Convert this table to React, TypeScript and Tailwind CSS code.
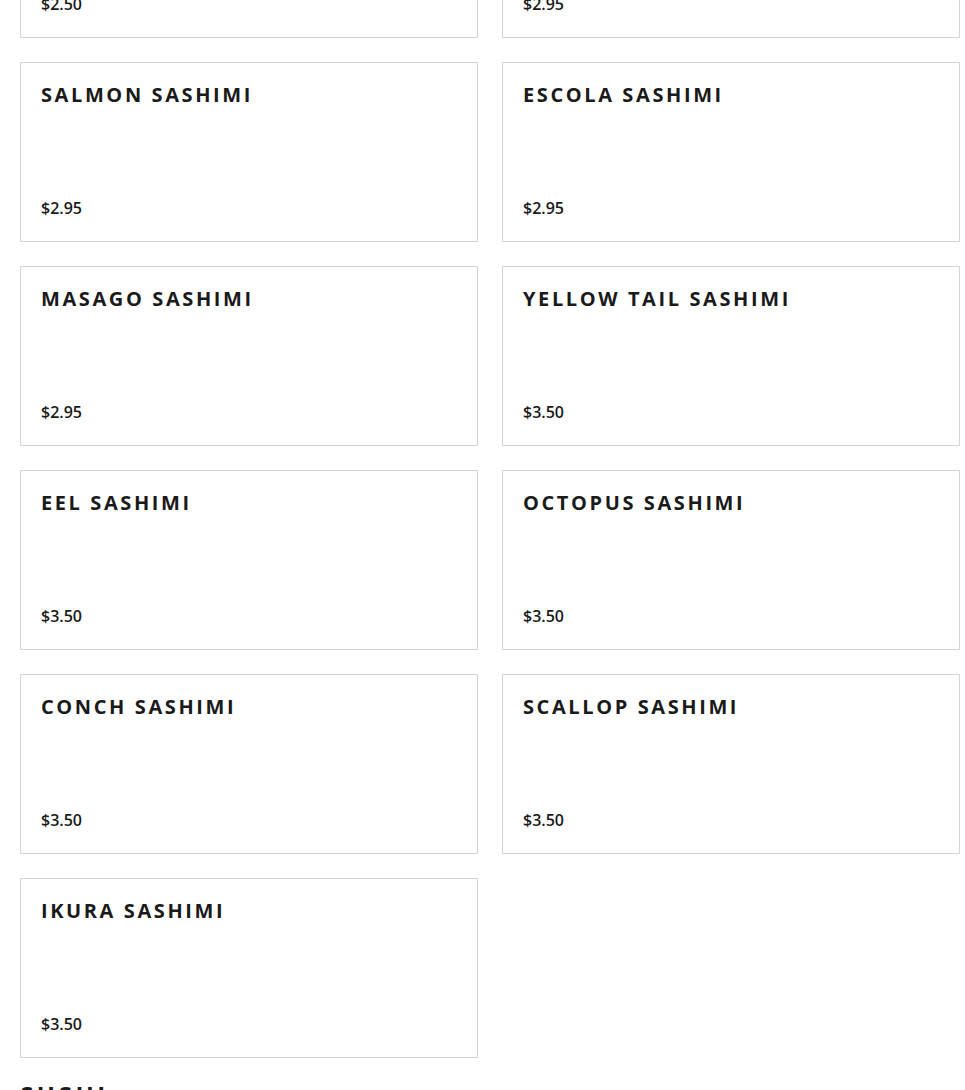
import React from "react";

const items: { name: string; price: string }[] = [
  { name: "Tuna Sashimi", price: "$2.50" },
  { name: "White Tuna Sashimi", price: "$2.95" },
  { name: "Salmon Sashimi", price: "$2.95" },
  { name: "Escola Sashimi", price: "$2.95" },
  { name: "Masago Sashimi", price: "$2.95" },
  { name: "Yellow Tail Sashimi", price: "$3.50" },
  { name: "Eel Sashimi", price: "$3.50" },
  { name: "Octopus Sashimi", price: "$3.50" },
  { name: "Conch Sashimi", price: "$3.50" },
  { name: "Scallop Sashimi", price: "$3.50" },
  { name: "Ikura Sashimi", price: "$3.50" },
];

function Card({ name, price }: { name: string; price: string }) {
  return (
    <div className="h-[180px] border border-[#d4d4d4] bg-white px-5 pt-[20px] pb-[23px] flex flex-col justify-between">
      <h3 className="uppercase text-[20px] leading-[24px] font-bold tracking-[0.13em] text-[#1a1a1a] [font-family:'Open_Sans',sans-serif]">
        {name}
      </h3>
      <p className="text-[16px] leading-[20px] font-semibold text-[#1a1a1a] [font-family:'Open_Sans',sans-serif]">
        {price}
      </p>
    </div>
  );
}

export default function App() {
  return (
    <div className="w-[965px] h-[1090px] overflow-hidden bg-white">
      <div className="pl-5 w-[960px] -mt-[142px]">
        <div className="grid grid-cols-2 gap-6">
          {items.map((it) => (
            <Card key={it.name} name={it.name} price={it.price} />
          ))}
        </div>
        <h2 className="mt-[21px] uppercase text-[24px] leading-[32px] font-bold tracking-[0.15em] text-[#1a1a1a] [font-family:'Open_Sans',sans-serif]">
          Sushi
        </h2>
      </div>
    </div>
  );
}
